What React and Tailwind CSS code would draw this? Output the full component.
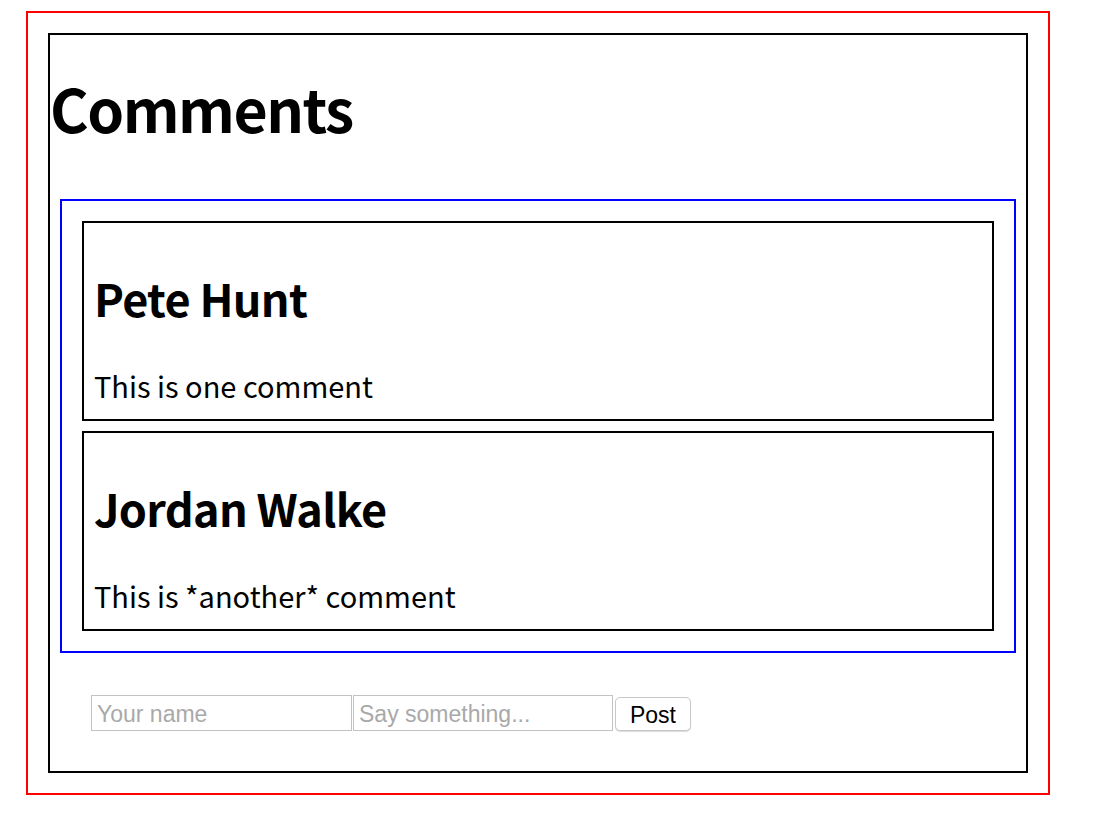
function Comment({ author, children }) {
  return (
    <div className="border-2 border-black px-[10px] pt-[44px] pb-[15px]">
      <h2 className="text-[45px] font-bold leading-[62px] tracking-[-0.7px]">{author}</h2>
      <p className="mt-[37px] text-[29px] leading-[38px]">{children}</p>
    </div>
  );
}

export default function App() {
  return (
    <div className="bg-white min-h-screen pl-[26px] pt-[11px] pb-[31px] text-black" style={{ fontFamily: '"Noto Sans CJK KR", "Noto Sans", sans-serif' }}>
      <div className="w-[1024px] h-[784px] border-2 border-[#ff0000] p-[20px]">
        <div className="h-[740px] border-2 border-black">
          <h1 className="mt-[30px] text-[59px] font-bold leading-[86px] tracking-[-1.5px]">Comments</h1>
          <div className="mx-[10px] mt-[48px] border-2 border-[#0000ff] p-[20px] flex flex-col gap-[10px]">
            <Comment author="Pete Hunt">This is one comment</Comment>
            <Comment author="Jordan Walke">This is *another* comment</Comment>
          </div>
          <form
            className="mt-[42px] ml-[41px] flex items-end gap-[1px]"
            style={{ fontFamily: '"Liberation Sans", Arial, sans-serif' }}
            onSubmit={(e) => e.preventDefault()}
          >
            <input
              type="text"
              placeholder="Your name"
              className="w-[261px] h-[36px] border border-[#c2c2c2] px-[5px] pt-[3px] text-[23px] placeholder:text-[#a9a9a9] outline-none"
            />
            <input
              type="text"
              placeholder="Say something..."
              className="w-[260px] h-[36px] border border-[#c2c2c2] px-[5px] pt-[3px] text-[23px] placeholder:text-[#a9a9a9] outline-none"
            />
            <button
              type="submit"
              className="ml-[1px] w-[76px] h-[34px] rounded-[5px] border border-[#c8c8c8] bg-white text-[23px] shadow-[0_1px_1px_rgba(0,0,0,0.15)]"
            >
              Post
            </button>
          </form>
        </div>
      </div>
    </div>
  );
}
